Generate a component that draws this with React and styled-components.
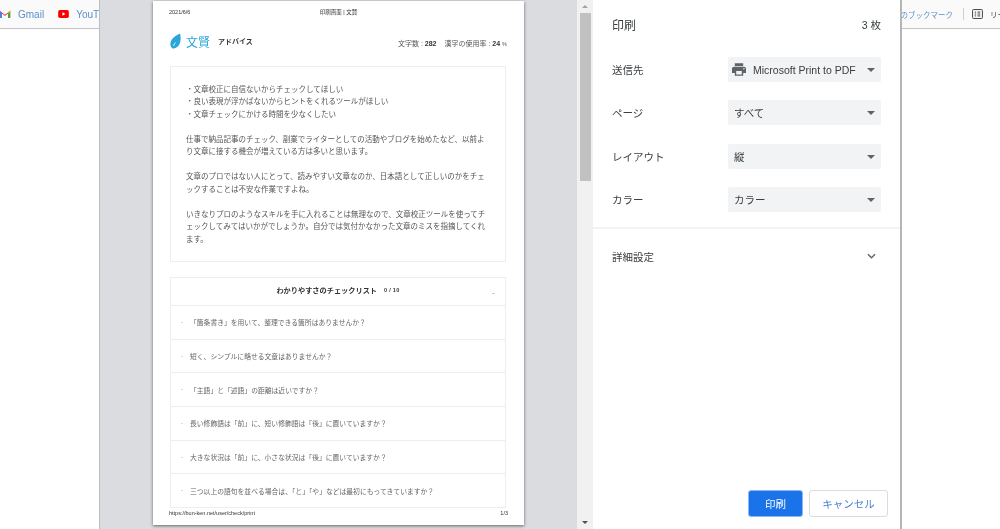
import styled, { createGlobalStyle } from "styled-components";

const GlobalStyle = createGlobalStyle`
  html, body {
    margin: 0;
    padding: 0;
    height: 100%;
    overflow: hidden;
    background: #fff;
  }
  body {
    font-family: "Liberation Sans", "Noto Sans CJK JP", sans-serif;
  }
`;

const Screen = styled.div`
  position: relative;
  width: 1000px;
  height: 529px;
  overflow: hidden;
  background: #fff;
  filter: blur(0.35px);
`;

const BookmarkBar = styled.div`
  display: flex;
  justify-content: space-between;
  align-items: center;
  height: 29px;
  box-sizing: border-box;
  border-bottom: 1px solid #c4c4c4;
  background: #fafafa;
  white-space: nowrap;
`;

const BookmarkGroup = styled.div`
  display: flex;
  align-items: center;
  flex: none;
  width: ${(p) => p.$width || "auto"};
`;

const Bookmark = styled.span`
  display: flex;
  flex: none;
  align-items: center;
  gap: 7px;
  margin-left: ${(p) => p.$left || 0}px;
  margin-right: ${(p) => (p.$right === undefined ? 14 : p.$right)}px;
  font-size: ${(p) => p.$size || 10}px;
  color: ${(p) => p.$color || "#5a8fc8"};
`;

const BarDivider = styled.span`
  flex: none;
  width: 1px;
  height: 12px;
  background: #d0d0d0;
  margin-right: 8px;
`;

const Dialog = styled.div`
  position: absolute;
  top: 0;
  left: 99px;
  width: 803px;
  height: 529px;
  display: flex;
  background: #fff;
  border-left: 1px solid #bdbdbd;
  border-right: 2px solid #b5b5b5;
  box-sizing: border-box;
`;

const Preview = styled.div`
  flex: 1;
  display: flex;
  justify-content: center;
  background: #dadce0;
  overflow: hidden;
`;

const Sheet = styled.div`
  width: 371px;
  height: 524px;
  margin-top: 1px;
  display: flex;
  flex-direction: column;
  box-sizing: border-box;
  background: #fff;
  box-shadow: 0 1px 3px rgba(0, 0, 0, 0.55);
  padding: 8px 16px 8px 16px;
`;

const PrintHead = styled.div`
  display: grid;
  grid-template-columns: 1fr auto 1fr;
  font-size: 5.5px;
  line-height: 7px;
  color: #333;
`;

const Brand = styled.div`
  display: flex;
  align-items: center;
  justify-content: space-between;
  padding: 0 1px;
  margin-top: 12px;
  height: 26px;
`;

const BrandLeft = styled.div`
  display: flex;
  align-items: center;
  gap: 5px;
`;

const LogoText = styled.span`
  font-size: 12px;
  color: #2ba6d9;
  margin-right: 3px;
`;

const BrandTag = styled.span`
  font-size: 7px;
  font-weight: 700;
  color: #333;
`;

const Stats = styled.div`
  font-size: 7px;
  margin-top: 3px;
  color: #555;
  b {
    color: #333;
  }
  span {
    margin-left: 8px;
  }
  small {
    font-size: 5.5px;
  }
`;

const Clip = styled.div`
  flex: 1;
  min-height: 0;
  overflow: hidden;
  padding: 0 2px 0 1px;
`;

const Card = styled.div`
  border: 1px solid #eeeeee;
  margin-top: ${(p) => p.$top || 0}px;
`;

const Advice = styled(Card)`
  height: 196px;
  box-sizing: border-box;
  padding: 16.5px 15px;
  font-size: 7.5px;
  line-height: 12.6px;
  color: #555;
  p {
    margin: 0 0 12.4px;
  }
`;

const CheckHead = styled.div`
  position: relative;
  height: 27px;
  box-sizing: border-box;
  padding-bottom: 4px;
  display: flex;
  align-items: center;
  justify-content: center;
  gap: 7px;
  font-size: 7.2px;
  font-weight: 700;
  color: #333;
  small {
    font-size: 5.5px;
    letter-spacing: 0.3px;
  }
  i {
    position: absolute;
    right: 10px;
    top: 15px;
    width: 3px;
    height: 1px;
    background: #ccc;
  }
`;

const CheckRow = styled.div`
  display: flex;
  align-items: center;
  height: 33.7px;
  box-sizing: border-box;
  border-top: 1px solid #eeeeee;
  padding-left: 10px;
  font-size: 6.8px;
  color: #666;
  &::before {
    content: "";
    width: 2px;
    height: 1px;
    margin-right: 7px;
    background: #ddd;
  }
`;

const PrintFoot = styled.div`
  display: flex;
  justify-content: space-between;
  font-size: 5.5px;
  line-height: 7px;
  color: #333;
  padding-top: 2px;
`;

const ScrollTrack = styled.div`
  width: 16px;
  flex: none;
  display: flex;
  flex-direction: column;
  align-items: center;
  background: #f1f1f1;
`;

const ScrollArrow = styled.div`
  height: 13px;
  display: flex;
  align-items: center;
  justify-content: center;
  &::before {
    content: "";
    border-left: 3px solid transparent;
    border-right: 3px solid transparent;
    ${(p) => (p.$down ? "border-top: 3px solid #505050;" : "border-bottom: 3px solid #a3a3a3;")}
  }
`;

const ScrollThumb = styled.div`
  width: 11px;
  height: 168px;
  background: #c1c1c1;
`;

const ScrollRest = styled.div`
  flex: 1;
`;

const Panel = styled.div`
  width: 307px;
  flex: none;
  display: flex;
  flex-direction: column;
  background: #fff;
`;

const PanelHead = styled.div`
  display: flex;
  justify-content: space-between;
  align-items: center;
  height: 48px;
  box-sizing: border-box;
  padding: 0 19px 0 19px;
  font-size: 12px;
  color: #3c4043;
  small {
    font-size: 10.5px;
  }
`;

const Settings = styled.div`
  display: flex;
  flex-direction: column;
  gap: 18.3px;
  padding: 9px 19px 15px 19px;
  border-bottom: 2px solid #f1f3f4;
`;

const Field = styled.div`
  display: flex;
  align-items: center;
  justify-content: space-between;
  font-size: 10.5px;
  color: #3c4043;
`;

const Select = styled.div`
  width: 153px;
  height: 25px;
  box-sizing: border-box;
  display: flex;
  align-items: center;
  padding: 0 5px 0 6px;
  border-radius: 2px;
  background: #f1f3f4;
  font-size: 10.5px;
  color: #3c4043;
  white-space: nowrap;
  svg {
    flex: none;
    margin: 0 7px 0 -2px;
  }
`;

const SelectText = styled.span`
  flex: 1;
`;

const Caret = styled.span`
  width: 0;
  height: 0;
  margin: 1px 1px 0 0;
  border-left: 4px solid transparent;
  border-right: 4px solid transparent;
  border-top: 4px solid #5f6368;
`;

const MoreRow = styled.div`
  display: flex;
  align-items: center;
  justify-content: space-between;
  padding: 20px 24px 0 19px;
  font-size: 10.5px;
  color: #3c4043;
`;

const Actions = styled.div`
  margin-top: auto;
  display: flex;
  justify-content: flex-end;
  gap: 6px;
  padding: 0 12px 12px 0;
`;

const Button = styled.button`
  height: 27px;
  width: ${(p) => (p.$primary ? 55 : 79)}px;
  box-sizing: border-box;
  border-radius: 3px;
  font-family: inherit;
  font-size: 10.5px;
  padding: 0;
  border: 1px solid ${(p) => (p.$primary ? "#8ab8f5" : "#dadce0")};
  background: ${(p) => (p.$primary ? "#1a73e8" : "#fff")};
  color: ${(p) => (p.$primary ? "#fff" : "#4a7fd0")};
`;

const adviceLines = [
  ["・文章校正に自信ないからチェックしてほしい", "・良い表現が浮かばないからヒントをくれるツールがほしい", "・文章チェックにかける時間を少なくしたい"],
  ["仕事で納品記事のチェック、副業でライターとしての活動やブログを始めたなど、以前より文章に接する機会が増えている方は多いと思います。"],
  ["文章のプロではない人にとって、読みやすい文章なのか、日本語として正しいのかをチェックすることは不安な作業ですよね。"],
  ["いきなりプロのようなスキルを手に入れることは無理なので、文章校正ツールを使ってチェックしてみてはいかがでしょうか。自分では気付かなかった文章のミスを指摘してくれます。"],
];

const checks = [
  "「箇条書き」を用いて、整理できる箇所はありませんか？",
  "短く、シンプルに略せる文章はありませんか？",
  "「主語」と「述語」の距離は近いですか？",
  "長い修飾語は「前」に、短い修飾語は「後」に置いていますか？",
  "大きな状況は「前」に、小さな状況は「後」に置いていますか？",
  "三つ以上の語句を並べる場合は、「と」「や」などは最初にもってきていますか？",
];

const fields = ["すべて", "縦", "カラー"];
const fieldLabels = ["ページ", "レイアウト", "カラー"];

function GmailIcon() {
  return (
    <svg width="12" height="10" viewBox="0 0 15 12">
      <path d="M1 11V2l6.5 5L14 2v9h-2.5V5.5L7.5 8.5 3.5 5.5V11z" fill="#ea4335" />
      <path d="M1 11V2l2.5 2v7z" fill="#4285f4" />
      <path d="M14 11V2l-2.500 2v7z" fill="#34a853" />
      <path d="M11.500 4 14 2v2l-2.500 1.500z" fill="#fbbc04" />
    </svg>
  );
}

function YoutubeIcon() {
  return (
    <svg width="11" height="8" viewBox="0 0 12 9">
      <rect width="12" height="9" rx="2" fill="#f00" />
      <path d="M4.800 2.500v4l3.400-2z" fill="#fff" />
    </svg>
  );
}

function ReaderIcon() {
  return (
    <svg width="11" height="10" viewBox="0 0 12 11" fill="none" stroke="#444" strokeWidth="1.100">
      <rect x="0.600" y="0.600" width="10.800" height="9.800" rx="1" />
      <path d="M3 3.400h1.500M3 5.500h1.500M3 7.600h1.500M6 3.400h3M6 5.500h3M6 7.600h3" />
    </svg>
  );
}

function LeafLogo() {
  return (
    <svg width="11" height="16" viewBox="0 0 11 16">
      <path d="M10 .5C11 4 11 9 9 12c-1.500 2.500-4.500 4-6.500 3.500C0 14-.3 10 1.500 7 3 4 7 2 10 .5z" fill="#2ba6d9" />
      <path d="M3.500 13c.5-1.500 1-2.500 2-3.500" stroke="#fff" strokeWidth="0.800" fill="none" />
    </svg>
  );
}

function PrinterIcon() {
  return (
    <svg width="14" height="13" viewBox="2 3 20 18" fill="#5f6368">
      <path d="M19 8H5c-1.660 0-3 1.340-3 3v6h4v4h12v-4h4v-6c0-1.660-1.340-3-3-3zm-3 11H8v-5h8v5zm3-7c-.550 0-1-.450-1-1s.450-1 1-1 1 .450 1 1-.450 1-1 1zm-1-9H6v4h12V3z" />
    </svg>
  );
}

function Chevron() {
  return (
    <svg width="9" height="6" viewBox="0 0 10 6" fill="none" stroke="#5f6368" strokeWidth="1.500">
      <path d="M1 1l4 4 4-4" />
    </svg>
  );
}

export default function App() {
  return (
    <Screen>
      <GlobalStyle />
      <BookmarkBar>
        <BookmarkGroup>
          <Bookmark $left={-1}>
            <GmailIcon />
            Gmail
          </Bookmark>
          <Bookmark>
            <YoutubeIcon />
            YouTube
          </Bookmark>
        </BookmarkGroup>
        <BookmarkGroup $width="107px">
          <Bookmark $size={7.5} $right={10}>
            他のブックマーク
          </Bookmark>
          <BarDivider />
          <Bookmark $size={7.5} $right={0} $color="#444">
            <ReaderIcon />
            リーディングリスト
          </Bookmark>
        </BookmarkGroup>
      </BookmarkBar>

      <Dialog>
        <Preview>
          <Sheet>
            <PrintHead>
              <span>2021/6/6</span>
              <span>印刷画面 | 文賢</span>
              <span />
            </PrintHead>
            <Brand>
              <BrandLeft>
                <LeafLogo />
                <LogoText>文賢</LogoText>
                <BrandTag>アドバイス</BrandTag>
              </BrandLeft>
              <Stats>
                文字数 : <b>282</b>
                <span>
                  漢字の使用率 : <b>24</b> <small>%</small>
                </span>
              </Stats>
            </Brand>
            <Clip>
              <Advice $top={12}>
                {adviceLines.map((lines, i) => (
                  <p key={i}>
                    {lines.map((line, j) => (
                      <span key={j}>
                        {line}
                        {j < lines.length - 1 && <br />}
                      </span>
                    ))}
                  </p>
                ))}
              </Advice>
              <Card $top={15}>
                <CheckHead>
                  わかりやすさのチェックリスト
                  <small>0 / 10</small>
                  <i />
                </CheckHead>
                {checks.map((text) => (
                  <CheckRow key={text}>{text}</CheckRow>
                ))}
              </Card>
            </Clip>
            <PrintFoot>
              <span>https://bun-ken.net/user/check/print</span>
              <span>1/3</span>
            </PrintFoot>
          </Sheet>
        </Preview>
        <ScrollTrack>
          <ScrollArrow />
          <ScrollThumb />
          <ScrollRest />
          <ScrollArrow $down />
        </ScrollTrack>
        <Panel>
          <PanelHead>
            <span>印刷</span>
            <small>3 枚</small>
          </PanelHead>
          <Settings>
            <Field>
              送信先
              <Select>
                <PrinterIcon />
                <SelectText>Microsoft Print to PDF</SelectText>
                <Caret />
              </Select>
            </Field>
            {fields.map((value, i) => (
              <Field key={value}>
                {fieldLabels[i]}
                <Select>
                  <SelectText>{value}</SelectText>
                  <Caret />
                </Select>
              </Field>
            ))}
          </Settings>
          <MoreRow>
            詳細設定
            <Chevron />
          </MoreRow>
          <Actions>
            <Button $primary>印刷</Button>
            <Button>キャンセル</Button>
          </Actions>
        </Panel>
      </Dialog>
    </Screen>
  );
}
